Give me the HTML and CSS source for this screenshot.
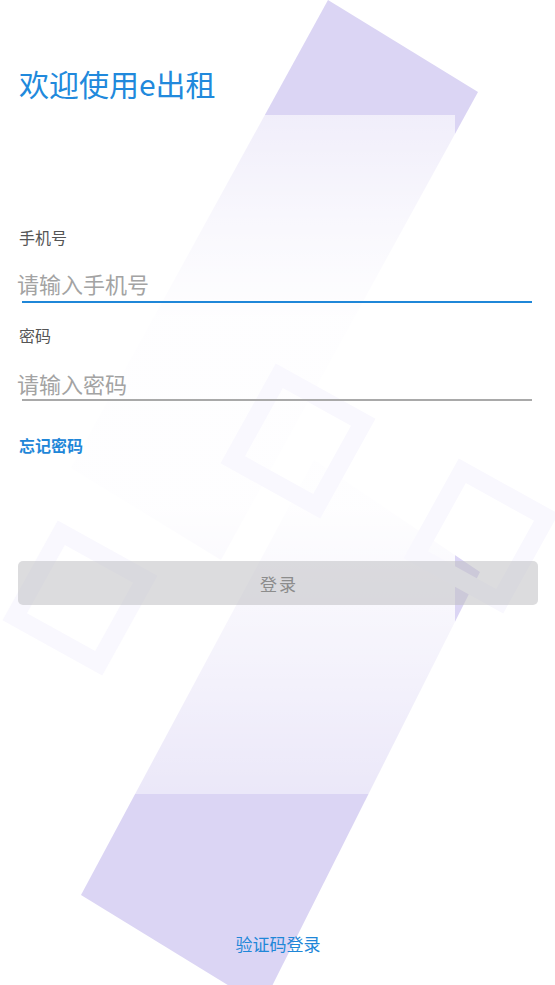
FILE: index.html
```html
<!DOCTYPE html>
<html lang="zh-CN">
<head>
<meta charset="utf-8">
<title>登录</title>
<link rel="stylesheet" href="styles.css">
</head>
<body>
<div class="page">
  <svg class="bg" viewBox="0 0 555 985" width="555" height="985" aria-hidden="true">
    <defs>
      <linearGradient id="veil" x1="0" y1="115" x2="0" y2="794" gradientUnits="userSpaceOnUse">
        <stop offset="0" stop-color="#fff" stop-opacity="0.6"/>
        <stop offset="0.15" stop-color="#fff" stop-opacity="0.82"/>
        <stop offset="0.3" stop-color="#fff" stop-opacity="0.97"/>
        <stop offset="0.58" stop-color="#fff" stop-opacity="0.97"/>
        <stop offset="0.8" stop-color="#fff" stop-opacity="0.72"/>
        <stop offset="1" stop-color="#fff" stop-opacity="0.45"/>
      </linearGradient>
    </defs>
    <polygon class="band" points="328,0 478,92 221,560 71,468"/>
    <polygon class="band" points="314,460 480,572 262,1006 81,895"/>
    <rect x="0" y="115" width="455" height="679" fill="url(#veil)"/>
    <g class="frames">
      <rect x="-48" y="-48" width="96" height="96" transform="translate(298 441) rotate(29)"/>
      <rect x="-48" y="-48" width="96" height="96" transform="translate(80 598) rotate(29)"/>
      <rect x="-48" y="-48" width="96" height="96" transform="translate(481 536) rotate(29)"/>
    </g>
  </svg>

  <main class="content">
    <h1 class="title">欢迎使用e出租</h1>
    <form class="form">
      <label class="label" for="phone">手机号</label>
      <div class="field field-active">
        <input class="input" id="phone" type="tel" placeholder="请输入手机号">
      </div>
      <label class="label label-gap" for="pwd">密码</label>
      <div class="field">
        <input class="input" id="pwd" type="password" placeholder="请输入密码">
      </div>
    </form>
    <a class="forgot">忘记密码</a>
    <button class="login" type="button">登录</button>
    <a class="code-login">验证码登录</a>
  </main>
</div>
</body>
</html>
```
FILE: styles.css
```css
* {
  box-sizing: border-box;
  margin: 0;
  padding: 0;
}

html,
body {
  background: #ffffff;
}

body {
  font-family: "Noto Sans CJK SC", "Noto Sans", sans-serif;
}

.page {
  position: relative;
  width: 555px;
  height: 985px;
  overflow: hidden;
  background: #ffffff;
}

.bg {
  position: absolute;
  left: 0;
  top: 0;
  width: 555px;
  height: 985px;
}

.band {
  fill: #dbd5f4;
}

.frames rect {
  fill: none;
  stroke: #f9f8fe;
  stroke-width: 18;
}

.content {
  position: relative;
  height: 100%;
  display: flex;
  flex-direction: column;
  padding: 64px 17px 31px 18px;
}

.title {
  font-size: 30px;
  font-weight: 400;
  line-height: 38px;
  color: #2189dc;
  padding-left: 1px;
}

.form {
  display: flex;
  flex-direction: column;
  margin-top: 125px;
}

.label {
  font-size: 16px;
  line-height: 20px;
  color: #555555;
  padding-left: 1px;
}

.label-gap {
  margin-top: 22px;
}

.field {
  margin-top: 16px;
  padding: 5px 0 5px 0;
  background: linear-gradient(#a9a9a9, #a9a9a9) no-repeat 4px 100% / calc(100% - 10px) 2px;
}

.field-active {
  background-image: linear-gradient(#1f87d8, #1f87d8);
}

.field + .label {
  margin-top: 22px;
}

.label-gap + .field {
  padding-top: 7px;
  padding-bottom: 3px;
}

.input {
  display: block;
  width: 100%;
  height: 30px;
  border: 0;
  outline: 0;
  background: transparent;
  font-family: inherit;
  font-size: 22px;
  line-height: 30px;
  padding: 0;
  margin-left: -1px;
  color: #333333;
}

.input::placeholder {
  color: #a3a3a3;
}

.forgot {
  margin-top: 34px;
  align-self: flex-start;
  font-size: 16px;
  line-height: 20px;
  font-weight: 700;
  color: #1f87d8;
  padding-left: 1px;
}

.login {
  margin-top: 106px;
  height: 44px;
  width: 100%;
  border: 0;
  border-radius: 5px;
  background: rgba(192, 192, 194, 0.55);
  font-family: inherit;
  font-size: 17px;
  letter-spacing: 2px;
  text-indent: 2px;
  color: #8c8c8c;
}

.code-login {
  margin-top: auto;
  align-self: center;
  font-size: 17px;
  line-height: 20px;
  color: #1f87d8;
}
```
